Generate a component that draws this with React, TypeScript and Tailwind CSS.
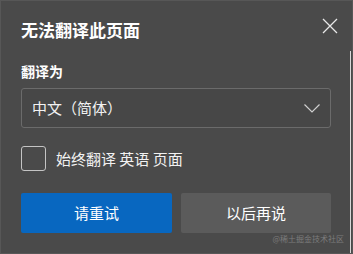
import { useState } from 'react'

const font = '"Noto Sans CJK SC", "Noto Sans", "Liberation Sans", sans-serif'

function App() {
  const [always, setAlways] = useState(false)

  return (
    <div
      className="relative h-[254px] w-[353px] overflow-hidden border border-[#575757] bg-[#4a4a4a] text-white"
      style={{ fontFamily: font }}
    >
      {/* right edge highlight */}
      <div className="absolute right-[1px] top-[50px] h-[204px] w-px bg-[#d8d8d8]" />

      <div className="flex flex-col pl-[20px] pr-[21px] pt-[17px]">
        {/* Header */}
        <div className="flex h-[24px] items-center justify-between">
          <h1 className="text-[17px] font-bold leading-[24px]">无法翻译此页面</h1>
          <button className="-mr-[9px] -mt-[8px] p-[2px]">
            <svg width="16" height="16" viewBox="0 0 16 16" fill="none" stroke="#e8e8e8" strokeWidth="1.3">
              <path d="M1 1L15 15M15 1L1 15" />
            </svg>
          </button>
        </div>

        <div className="mt-[20px] h-[18px] text-[14px] font-bold leading-[18px]">翻译为</div>

        {/* Select */}
        <div className="mt-[8px] flex h-[40px] items-center justify-between rounded-[3px] border border-[#6b6b6b] bg-[#474747] pl-[10px] pr-[10px]">
          <span className="text-[15px] text-[#f2f2f2]">中文（简体）</span>
          <svg width="16" height="9" viewBox="0 0 16 9" fill="none" stroke="#d0d0d0" strokeWidth="1.2">
            <path d="M0.5 0.5L8 8L15.5 0.5" />
          </svg>
        </div>

        {/* Checkbox */}
        <label className="mt-[18px] flex h-[25px] items-center gap-[10px]" onClick={() => setAlways(!always)}>
          <span className="h-[25px] w-[25px] rounded-[3px] border-[1.5px] border-[#c4c4c4]" />
          <span className="text-[15px] leading-[20px] text-[#f2f2f2]">始终翻译 英语 页面</span>
        </label>

        {/* Buttons */}
        <div className="mt-[22px] flex gap-[9px]">
          <button className="h-[40px] w-[151px] rounded-[2px] bg-[#0867c0] text-[15px] text-white">请重试</button>
          <button className="h-[40px] w-[150px] rounded-[2px] bg-[#5b5b5b] text-[15px] text-white">以后再说</button>
        </div>
      </div>

      <div className="absolute bottom-[9px] right-[8px] text-[8px] leading-[10px] text-[#7c7c7c]">@稀土掘金技术社区</div>
    </div>
  )
}

export default App
